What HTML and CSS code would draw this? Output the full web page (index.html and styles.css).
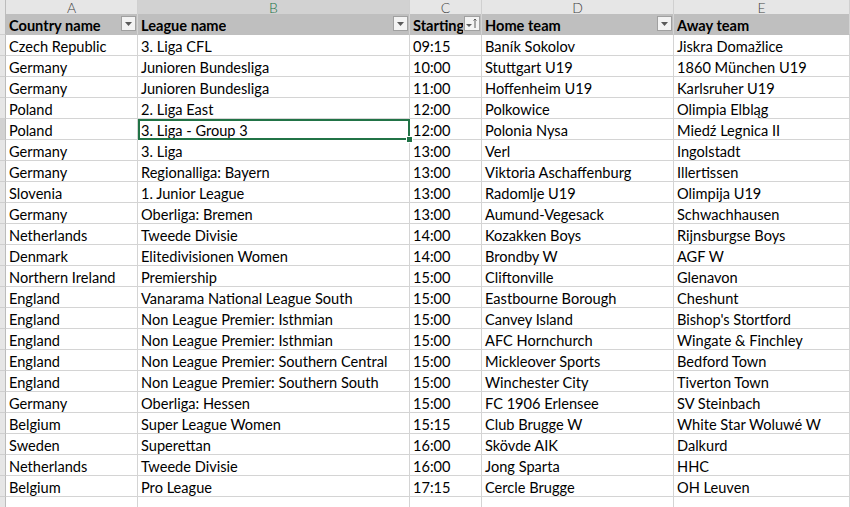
FILE: index.html
```html
<!DOCTYPE html>
<html>
<head>
<meta charset="utf-8">
<link rel="stylesheet" href="styles.css">
</head>
<body>
<div class="sheet">
  <div class="colhead">
    <div class="corner"></div>
    <div class="ch">A</div>
    <div class="ch sel">B</div>
    <div class="ch">C</div>
    <div class="ch">D</div>
    <div class="ch">E</div>
  </div>
  <div class="row hdr">
    <div class="rh"></div>
    <div class="c"><span class="t">Country name</span><span class="fb"><svg width="7" height="4" viewBox="0 0 7 4"><path d="M0 0h7L3.5 4z" fill="#5a5a5a"/></svg></span></div>
    <div class="c"><span class="t">League name</span><span class="fb"><svg width="7" height="4" viewBox="0 0 7 4"><path d="M0 0h7L3.5 4z" fill="#5a5a5a"/></svg></span></div>
    <div class="c"><span class="t">Starting time</span><span class="fb sort"><svg width="12" height="11" viewBox="0 0 12 11"><path d="M0 6h6L3 9z" fill="#5a5a5a"/><path d="M9 1v9M7.5 2.5L9 1l1.5 1.5" stroke="#5a5a5a" stroke-width="1" fill="none"/></svg></span></div>
    <div class="c"><span class="t">Home team</span><span class="fb"><svg width="7" height="4" viewBox="0 0 7 4"><path d="M0 0h7L3.5 4z" fill="#5a5a5a"/></svg></span></div>
    <div class="c"><span class="t">Away team</span></div>
  </div>
  <div id="rows"></div>
  <div class="row"><div class="rh"></div><div class="c"></div><div class="c"></div><div class="c"></div><div class="c"></div><div class="c"></div></div>
</div>
<script>
var d=[
["Czech Republic","3. Liga CFL","09:15","Baník Sokolov","Jiskra Domažlice"],
["Germany","Junioren Bundesliga","10:00","Stuttgart U19","1860 München U19"],
["Germany","Junioren Bundesliga","11:00","Hoffenheim U19","Karlsruher U19"],
["Poland","2. Liga East","12:00","Polkowice","Olimpia Elbląg"],
["Poland","3. Liga - Group 3","12:00","Polonia Nysa","Miedź Legnica II"],
["Germany","3. Liga","13:00","Verl","Ingolstadt"],
["Germany","Regionalliga: Bayern","13:00","Viktoria Aschaffenburg","Illertissen"],
["Slovenia","1. Junior League","13:00","Radomlje U19","Olimpija U19"],
["Germany","Oberliga: Bremen","13:00","Aumund-Vegesack","Schwachhausen"],
["Netherlands","Tweede Divisie","14:00","Kozakken Boys","Rijnsburgse Boys"],
["Denmark","Elitedivisionen Women","14:00","Brondby W","AGF W"],
["Northern Ireland","Premiership","15:00","Cliftonville","Glenavon"],
["England","Vanarama National League South","15:00","Eastbourne Borough","Cheshunt"],
["England","Non League Premier: Isthmian","15:00","Canvey Island","Bishop's Stortford"],
["England","Non League Premier: Isthmian","15:00","AFC Hornchurch","Wingate & Finchley"],
["England","Non League Premier: Southern Central","15:00","Mickleover Sports","Bedford Town"],
["England","Non League Premier: Southern South","15:00","Winchester City","Tiverton Town"],
["Germany","Oberliga: Hessen","15:00","FC 1906 Erlensee","SV Steinbach"],
["Belgium","Super League Women","15:15","Club Brugge W","White Star Woluwé W"],
["Sweden","Superettan","16:00","Skövde AIK","Dalkurd"],
["Netherlands","Tweede Divisie","16:00","Jong Sparta","HHC"],
["Belgium","Pro League","17:15","Cercle Brugge","OH Leuven"]
];
var h="";
d.forEach(function(r,i){
  h+='<div class="row'+(i==4?' cur':'')+'"><div class="rh"></div>';
  r.forEach(function(v,j){h+='<div class="c'+(i==4&&j==1?' active':'')+'">'+v+(i==4&&j==1?'<span class="handle"></span>':'')+'</div>';});
  h+='</div>';
});
document.getElementById("rows").innerHTML=h;
</script>
</body>
</html>
```
FILE: styles.css
```css
html,body{margin:0;padding:0;background:#fff;overflow:hidden;}
.sheet{width:850px;height:507px;overflow:hidden;font-family:Lato,"Liberation Sans",sans-serif;font-size:14.6px;color:#000;}
.colhead,.row{display:grid;grid-template-columns:6px 132px 272px 72px 192px 1fr;}
.colhead{height:14px;background:#e6e6e6;}
.corner{border-right:1px solid #bcbcbc;border-bottom:1px solid #bcbcbc;}
.ch{border-right:1px solid #d0d0d0;border-bottom:1px solid #bcbcbc;text-align:center;font-size:14px;line-height:14px;color:#444;font-weight:300;padding-top:1px;box-sizing:border-box;}
.ch.sel{background:#d2d2d2;color:#217346;border-bottom:2px solid #217346;}
.row{height:21px;grid-template-rows:21px;}
.rh{background:#e6e6e6;border-right:1px solid #bcbcbc;border-bottom:1px solid #cfcfcf;}
.row.cur .rh{background:#d2d2d2;}
.c{position:relative;box-sizing:border-box;height:21px;border-right:1px solid #d4d4d4;border-bottom:1px solid #d4d4d4;padding:3px 0 0 3px;line-height:17px;white-space:nowrap;overflow:hidden;}
.row.cur .c{overflow:visible;}
.hdr .c{background:#bfbfbf;font-weight:700;border-color:#bfbfbf;border-right-color:#d4d4d4;display:flex;}
.hdr .t{overflow:hidden;white-space:nowrap;flex:0 1 auto;min-width:0;margin-right:18px;}
.fb{position:absolute;right:1px;top:2px;width:15px;height:15px;box-sizing:border-box;background:#f3f3f3;border:1px solid #a0a0a0;display:flex;align-items:center;justify-content:center;}
.fb.sort{width:16px;}
.active{outline:2px solid #217346;outline-offset:-2px;z-index:2;}
.active .handle{position:absolute;right:-4px;bottom:-4px;width:5px;height:5px;background:#217346;border:1px solid #fff;}
```
